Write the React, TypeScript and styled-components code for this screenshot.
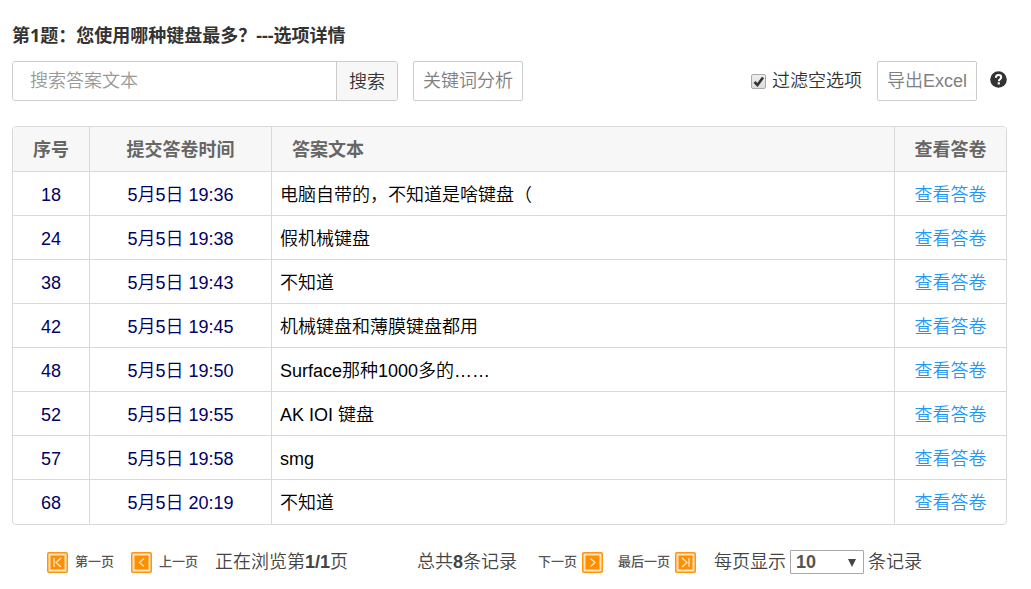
import React, { useState } from "react";
import styled, { createGlobalStyle } from "styled-components";

const GlobalStyle = createGlobalStyle`
  *, *::before, *::after { box-sizing: border-box; }
  body {
    margin: 0;
    background: #fff;
    color: #444;
    font: 350 18px/24px "Liberation Sans", "Noto Sans CJK SC", sans-serif;
  }
  button, input, select { font: inherit; color: inherit; margin: 0; }
  b { font-weight: 700; }
`;

const Page = styled.main`
  padding: 23px 24px 0 12px;
`;

const Title = styled.h1`
  margin: 0;
  color: #333;
  font-family: "Noto Sans", "Noto Sans CJK SC", sans-serif;
  font-size: 18px;
  font-weight: 700;
  line-height: 24px;
`;

const Toolbar = styled.div`
  display: flex;
  align-items: center;
  gap: 15px;
  margin: 14px 0 25px;
`;

const SearchForm = styled.form`
  display: flex;
  width: 386px;
  height: 40px;
  border: 1px solid #ccc;
  border-radius: 3px;
  overflow: hidden;
`;

const SearchInput = styled.input`
  flex: 1;
  min-width: 0;
  padding: 0 17px;
  border: 0;
  outline: 0;
  background: #fff;
  &::placeholder { color: #999; opacity: 1; }
`;

const SearchButton = styled.button`
  width: 61px;
  padding: 2px 0 0;
  border: 0;
  border-left: 1px solid #ccc;
  background: #f7f7f7;
  color: #333;
`;

const OutlineButton = styled.button<{ $width: number }>`
  width: ${(p) => p.$width}px;
  height: 40px;
  padding: 0;
  border: 1px solid #ccc;
  border-radius: 2px;
  background: #fff;
  color: #808080;
  white-space: nowrap;
`;

const FilterLabel = styled.label`
  display: flex;
  align-items: center;
  gap: 6px;
  margin-left: auto;
  color: #333;
`;

const CheckHolder = styled.span`
  display: grid;
  > * { grid-area: 1 / 1; }
  svg { pointer-events: none; }
  input:not(:checked) + svg { visibility: hidden; }
`;

const Checkbox = styled.input`
  appearance: none;
  width: 15px;
  height: 15px;
  border: 1px solid #aaa;
  border-radius: 2px;
  background: linear-gradient(#eee, #dcdcdc);
`;

const HelpButton = styled.button`
  display: flex;
  padding: 0 0 4px;
  margin-left: -2px;
  border: 0;
  background: none;
`;

const TableFrame = styled.div`
  border: 1px solid #d9d9d9;
  border-radius: 4px;
  overflow: hidden;
`;

const Table = styled.table`
  width: 100%;
  table-layout: fixed;
  border-collapse: separate;
  border-spacing: 0;
  tbody tr:last-child td { border-bottom: 0; }
`;

const Col = styled.col<{ $width?: number }>`
  width: ${(p) => (p.$width ? `${p.$width}px` : "auto")};
`;

const HeadCell = styled.th<{ $start?: boolean }>`
  height: 45px;
  padding: 2px ${(p) => (p.$start ? 20 : 0)}px 0;
  border-right: 1px solid #d9d9d9;
  border-bottom: 1px solid #d9d9d9;
  background: #f7f7f7;
  color: #666;
  font-weight: 700;
  text-align: ${(p) => (p.$start ? "left" : "center")};
  &:last-child { border-right: 0; }
`;

const Cell = styled.td<{ $start?: boolean }>`
  height: 44px;
  padding: 2px ${(p) => (p.$start ? 8 : 0)}px 0;
  border-right: 1px solid #d9d9d9;
  border-bottom: 1px solid #d9d9d9;
  color: ${(p) => (p.$start ? "#000" : "#000066")};
  text-align: ${(p) => (p.$start ? "left" : "center")};
  &:last-child { border-right: 0; }
`;

const ViewLink = styled.a`
  color: #1e98f7;
  text-decoration: none;
`;

const Pager = styled.nav`
  display: grid;
  grid-template-columns: 84px 84px 202px 121px 80px 96px auto;
  align-items: center;
  padding: 25px 0 14px 35px;
  white-space: nowrap;
`;

const PageLink = styled.a<{ $gap: number }>`
  display: flex;
  align-items: center;
  gap: ${(p) => p.$gap}px;
  color: #555;
  font-size: 13px;
  font-weight: 500;
  text-decoration: none;
`;

const SizeLabel = styled.label`
  display: flex;
  align-items: center;
  gap: 4px;
`;

const SelectHolder = styled.span`
  position: relative;
  svg { position: absolute; right: 8px; top: 9px; pointer-events: none; }
`;

const SizeSelect = styled.select`
  display: block;
  appearance: none;
  width: 74px;
  height: 24px;
  padding: 0 5px;
  border: 1px solid #a9a9a9;
  border-radius: 1px;
  background: #fff;
  color: #555;
  font-weight: 700;
  line-height: 20px;
`;

const arrows = {
  first: "M7 6v9M14 6l-5 4.5 5 4.5",
  prev: "M13 6.500l-4.500 4 4.500 4",
  next: "M8.500 6.500l4.500 4-4.500 4",
  last: "M14 6v9M7 6l5 4.500-5 4.500",
};

function PageIcon({ kind }: { kind: keyof typeof arrows }) {
  return (
    <svg width="21" height="21" viewBox="0 0 21 21" aria-hidden="true">
      <rect width="21" height="21" rx="2" fill="#ff950f" />
      <rect x="1.500" y="1.500" width="18" height="18" rx="1" fill="#ffe3bd" />
      <rect x="3.500" y="3.500" width="14" height="14" fill="#ff8e00" />
      <path d={arrows[kind]} fill="none" stroke="#ffe8c8" strokeWidth="1.300" />
    </svg>
  );
}

const rows = [
  { id: 18, time: "5月5日 19:36", text: "电脑自带的，不知道是啥键盘（" },
  { id: 24, time: "5月5日 19:38", text: "假机械键盘" },
  { id: 38, time: "5月5日 19:43", text: "不知道" },
  { id: 42, time: "5月5日 19:45", text: "机械键盘和薄膜键盘都用" },
  { id: 48, time: "5月5日 19:50", text: "Surface那种1000多的……" },
  { id: 52, time: "5月5日 19:55", text: "AK IOI 键盘" },
  { id: 57, time: "5月5日 19:58", text: "smg" },
  { id: 68, time: "5月5日 20:19", text: "不知道" },
];

export default function App() {
  const [filter, setFilter] = useState(true);
  return (
    <Page lang="zh-CN">
      <GlobalStyle />
      <Title>第1题：您使用哪种键盘最多？---选项详情</Title>
      <Toolbar>
        <SearchForm onSubmit={(e) => e.preventDefault()}>
          <SearchInput type="text" placeholder="搜索答案文本" aria-label="搜索答案文本" />
          <SearchButton type="submit">搜索</SearchButton>
        </SearchForm>
        <OutlineButton type="button" $width={110}>关键词分析</OutlineButton>
        <FilterLabel>
          <CheckHolder>
            <Checkbox
              type="checkbox"
              checked={filter}
              onChange={(e) => setFilter(e.target.checked)}
            />
            <svg width="15" height="15" viewBox="0 0 15 15" aria-hidden="true">
              <path d="M3.500 8l3 3 5.500-7.500" fill="none" stroke="#333" strokeWidth="2.600" />
            </svg>
          </CheckHolder>
          过滤空选项
        </FilterLabel>
        <OutlineButton type="button" $width={100}>导出Excel</OutlineButton>
        <HelpButton type="button" aria-label="帮助">
          <svg width="17" height="17" viewBox="0 0 17 17" aria-hidden="true">
            <circle cx="8.500" cy="8.500" r="8.300" fill="#333" />
            <path
              d="M5.900 6.700C5.900 4.900 7 4 8.500 4s2.700.9 2.700 2.300c0 1.900-2.400 1.900-2.400 3.900"
              fill="none"
              stroke="#fff"
              strokeWidth="2"
            />
            <rect x="7.700" y="11.300" width="2.200" height="2.200" fill="#fff" />
          </svg>
        </HelpButton>
      </Toolbar>

      <TableFrame>
        <Table>
          <colgroup>
            <Col $width={77} />
            <Col $width={182} />
            <Col />
            <Col $width={111} />
          </colgroup>
          <thead>
            <tr>
              <HeadCell scope="col">序号</HeadCell>
              <HeadCell scope="col">提交答卷时间</HeadCell>
              <HeadCell scope="col" $start>答案文本</HeadCell>
              <HeadCell scope="col">查看答卷</HeadCell>
            </tr>
          </thead>
          <tbody>
            {rows.map((row) => (
              <tr key={row.id}>
                <Cell>{row.id}</Cell>
                <Cell>{row.time}</Cell>
                <Cell $start>{row.text}</Cell>
                <Cell><ViewLink href="#">查看答卷</ViewLink></Cell>
              </tr>
            ))}
          </tbody>
        </Table>
      </TableFrame>

      <Pager aria-label="分页">
        <PageLink href="#" $gap={7}><PageIcon kind="first" />第一页</PageLink>
        <PageLink href="#" $gap={7}><PageIcon kind="prev" />上一页</PageLink>
        <span>正在浏览第<b>1/1</b>页</span>
        <span>总共<b>8</b>条记录</span>
        <PageLink href="#" $gap={5}>下一页<PageIcon kind="next" /></PageLink>
        <PageLink href="#" $gap={5}>最后一页<PageIcon kind="last" /></PageLink>
        <SizeLabel>
          每页显示
          <SelectHolder>
            <SizeSelect defaultValue="10">
              <option>10</option>
              <option>20</option>
              <option>50</option>
            </SizeSelect>
            <svg width="8" height="8" viewBox="0 0 8 8" aria-hidden="true">
              <path d="M0 0h8L4 8z" fill="#444" />
            </svg>
          </SelectHolder>
          条记录
        </SizeLabel>
      </Pager>
    </Page>
  );
}
